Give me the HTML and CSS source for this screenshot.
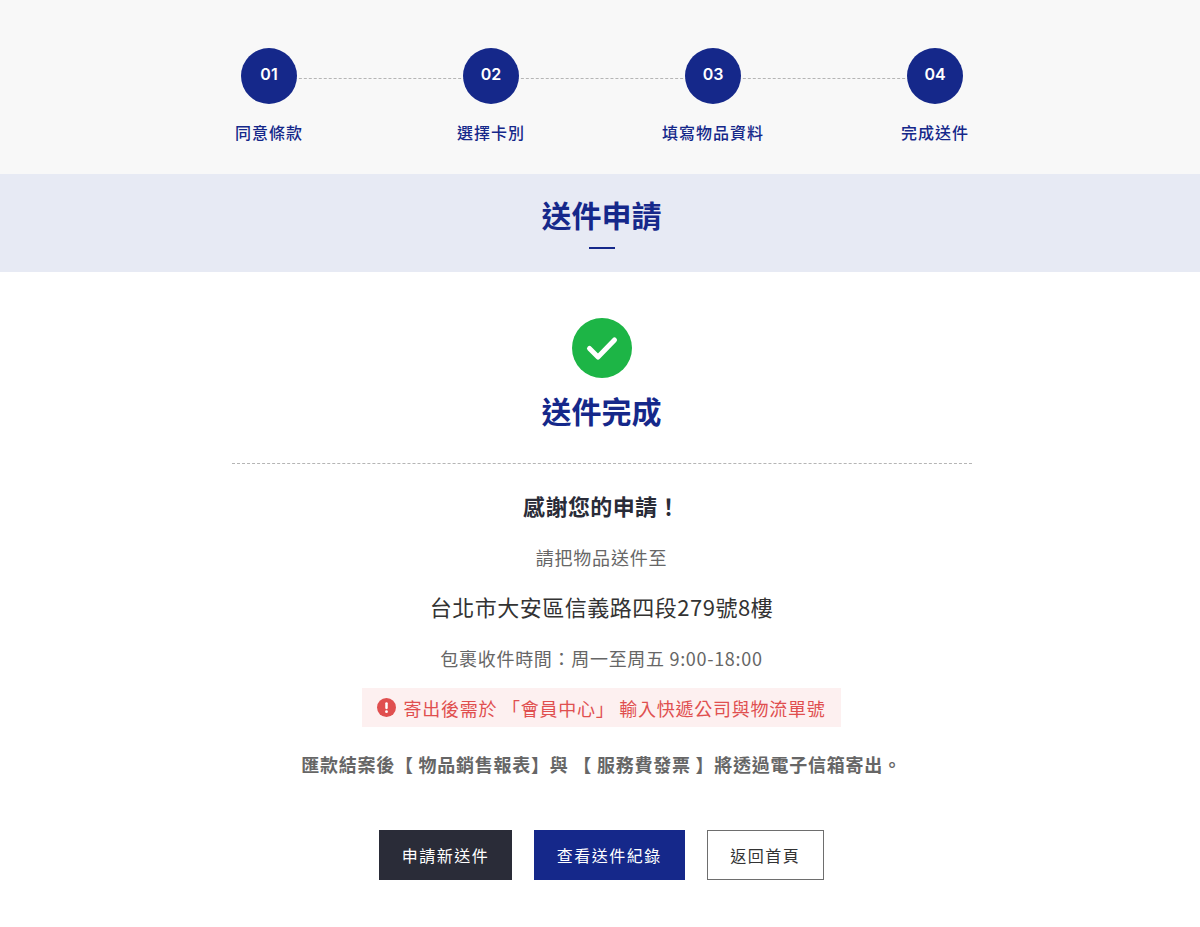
FILE: index.html
```html
<!DOCTYPE html>
<html lang="zh-Hant">
<head>
<meta charset="utf-8">
<title>送件完成</title>
<link rel="stylesheet" href="styles.css">
</head>
<body>
<section class="steps">
  <ol class="steps-list">
    <li class="step"><span class="step-num">01</span><span class="step-label">同意條款</span></li>
    <li class="step"><span class="step-num">02</span><span class="step-label">選擇卡別</span></li>
    <li class="step"><span class="step-num">03</span><span class="step-label">填寫物品資料</span></li>
    <li class="step"><span class="step-num">04</span><span class="step-label">完成送件</span></li>
  </ol>
</section>
<header class="banner">
  <h1 class="banner-title">送件申請</h1>
  <span class="banner-bar"></span>
</header>
<main class="content">
  <svg class="check" viewBox="0 0 60 60" aria-hidden="true">
    <circle cx="30" cy="30" r="30" fill="#1db546"/>
    <path d="M17.5 30.5 L26 39 L42.5 22" fill="none" stroke="#fff" stroke-width="5" stroke-linecap="round" stroke-linejoin="round"/>
  </svg>
  <h2 class="done-title">送件完成</h2>
  <hr class="divider">
  <p class="thanks">感謝您的申請！</p>
  <p class="send-to">請把物品送件至</p>
  <p class="address">台北市大安區信義路四段279號8樓</p>
  <p class="hours">包裹收件時間：周一至周五 9:00-18:00</p>
  <p class="notice">
    <svg class="notice-icon" viewBox="0 0 20 20" aria-hidden="true">
      <circle cx="10" cy="10" r="10" fill="#e04f4f"/>
      <rect x="8.7" y="4.4" width="2.6" height="7.4" rx="1.2" fill="#fff"/>
      <circle cx="10" cy="14.4" r="1.5" fill="#fff"/>
    </svg>
    <span>寄出後需於 「會員中心」 輸入快遞公司與物流單號</span>
  </p>
  <p class="mail-note">匯款結案後【 物品銷售報表】與 【 服務費發票 】將透過電子信箱寄出。</p>
  <div class="actions">
    <a class="btn btn-dark" href="#">申請新送件</a>
    <a class="btn btn-blue" href="#">查看送件紀錄</a>
    <a class="btn btn-outline" href="#">返回首頁</a>
  </div>
</main>
</body>
</html>
```
FILE: styles.css
```css
* { box-sizing: border-box; }
html, body { margin: 0; padding: 0; }
body {
  background: #fff;
  font-family: "Noto Sans CJK TC", "Noto Sans", sans-serif;
  color: #2a2c38;
  height: 927px;
  overflow: hidden;
}
p, h1, h2 { margin: 0; }

.steps {
  height: 174px;
  background: #f8f8f8;
  padding-top: 48px;
}
.steps-list {
  list-style: none;
  margin: 0 0 0 158px;
  padding: 0;
  width: 888px;
  display: grid;
  grid-template-columns: repeat(4, 1fr);
}
.step {
  position: relative;
  display: flex;
  flex-direction: column;
  align-items: center;
}
.step:not(:last-child)::after {
  content: "";
  position: absolute;
  top: 30px;
  left: 50%;
  width: 100%;
  border-top: 1px dashed #b5b5b5;
}
.step-num {
  position: relative;
  z-index: 1;
  width: 56px;
  height: 56px;
  border-radius: 50%;
  background: #15288a;
  color: #fff;
  font-family: Inter, "Noto Sans", sans-serif;
  font-weight: 600;
  font-size: 16px;
  display: flex;
  align-items: center;
  justify-content: center;
  padding-bottom: 5px;
}
.step-label {
  margin-top: 16px;
  font-size: 16px;
  line-height: 24px;
  font-weight: 500;
  letter-spacing: 1px;
  color: #15288a;
}

.banner {
  height: 98px;
  background: #e7eaf4;
  display: flex;
  flex-direction: column;
  align-items: center;
  padding: 18px 0 0 3px;
}
.banner-title, .done-title {
  font-size: 30px;
  line-height: 44px;
  font-weight: 700;
  color: #15288a;
}
.banner-bar {
  display: block;
  width: 26px;
  height: 2px;
  margin-top: 11px;
  background: #15288a;
}

.content {
  display: flex;
  flex-direction: column;
  align-items: center;
  padding: 46px 0 0 3px;
}
.check { width: 60px; height: 60px; display: block; }
.done-title { margin-top: 10px; }
.divider {
  width: 740px;
  margin: 31px 0 0;
  border: 0;
  border-top: 1px dashed #b5b5b5;
}
.thanks {
  margin-top: 24px;
  font-size: 22px;
  line-height: 34px;
  font-weight: 700;
  letter-spacing: 0.4px;
  color: #2a2c38;
}
.send-to {
  margin-top: 18px;
  font-size: 18px;
  line-height: 34px;
  letter-spacing: 0.8px;
  color: #666;
}
.address {
  margin-top: 15px;
  font-size: 22px;
  line-height: 34px;
  letter-spacing: 0.5px;
  color: #333;
}
.hours {
  margin-top: 18px;
  font-size: 18px;
  line-height: 34px;
  letter-spacing: 0.7px;
  color: #666;
}
.notice {
  margin-top: 13px;
  height: 39px;
  padding: 0 15px;
  display: flex;
  align-items: center;
  gap: 7px;
  background: #fdf0f0;
  color: #e04f4f;
  font-size: 18px;
  letter-spacing: 0.75px;
}
.notice-icon { width: 19px; height: 19px; flex: none; }
.mail-note {
  margin-top: 20px;
  font-size: 18px;
  line-height: 34px;
  font-weight: 700;
  letter-spacing: 0.75px;
  color: #666;
}
.actions {
  margin-top: 49px;
  display: flex;
  gap: 22px;
}
.btn {
  height: 50px;
  padding: 0 22px;
  display: flex;
  align-items: center;
  font-size: 16px;
  text-decoration: none;
  letter-spacing: 1.5px;
  border: 1px solid transparent;
}
.btn-dark { background: #2a2c38; color: #fff; border: 0; padding: 0 22.5px; }
.btn-blue { background: #15288a; color: #fff; }
.btn-outline { background: #fff; color: #333; border-color: #6e6e6e; padding: 0 22.5px; }
```
